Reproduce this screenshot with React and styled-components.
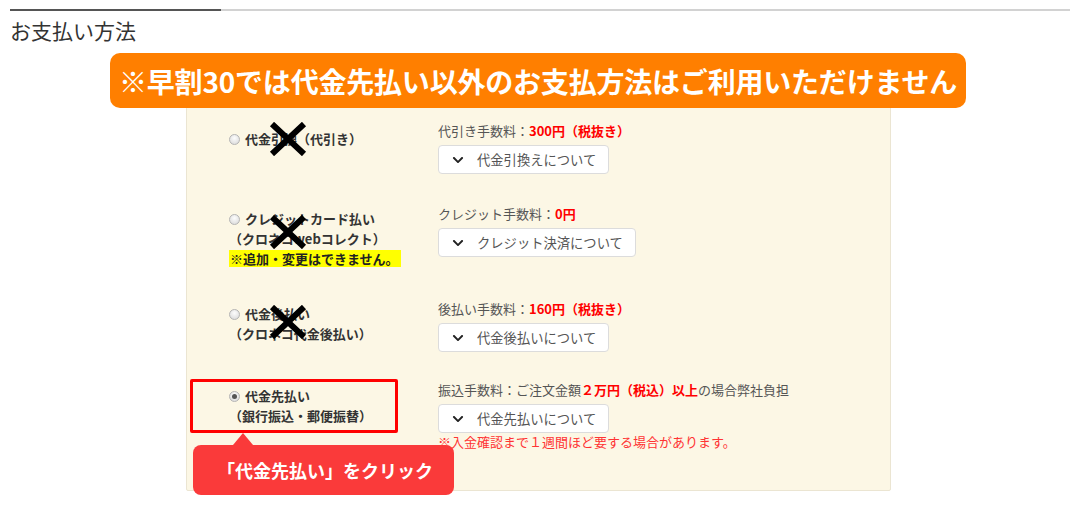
import styled, { createGlobalStyle } from "styled-components";
import { FaChevronDown } from "react-icons/fa";

const GlobalStyle = createGlobalStyle`
  body {
    margin: 0;
    background: #fff;
    font-family: "Noto Sans CJK JP", "Noto Sans", sans-serif;
    color: #333;
  }
`;

const Page = styled.div`
  position: relative;
  width: 1080px;
  height: 509px;
  padding: 9px 10px 0;
  box-sizing: border-box;
  overflow: hidden;
`;

const TabBar = styled.div`
  display: flex;
  height: 2px;
`;

const TabActive = styled.div`
  width: 211px;
  background: #555;
`;

const TabRest = styled.div`
  flex: 1;
  height: 2px;
  background: #d2d2d2;
`;

const Title = styled.h2`
  margin: 7px 0 0;
  font-size: 21px;
  font-weight: normal;
  line-height: 24px;
  color: #333;
`;

const Panel = styled.div`
  margin: 13px 0 0 176px;
  width: 705px;
  box-sizing: border-box;
  background: #fcf7e5;
  border: 1px solid #ebe5d2;
  border-radius: 2px;
  padding: 66px 0 8px;
`;

const Row = styled.div`
  display: grid;
  grid-template-columns: 251px 1fr;
  align-items: start;
  padding-bottom: ${(p) => p.$gap ?? 31}px;
`;

const Choice = styled.div`
  position: relative;
  padding: ${(p) => p.$pad ?? 4}px 0 0 42px;
  font-size: 13px;
  font-weight: bold;
  line-height: 20px;
  color: #333;
`;

const SelectedChoice = styled(Choice)`
  justify-self: start;
  width: 208px;
  box-sizing: border-box;
  margin: -2px 0 0 3px;
  padding: 4px 0 4px 36px;
  border: 3px solid #f00;
  border-radius: 2px;
`;

const Radio = styled.span`
  display: inline-block;
  width: 11px;
  height: 11px;
  margin-right: 5px;
  vertical-align: -1px;
  border-radius: 50%;
  box-sizing: border-box;
  border: 1px solid #b4b4b4;
  background: radial-gradient(circle at 50% 35%, #fdfdfd, #d6d6d6);
  position: relative;

  &::after {
    content: "";
    display: ${(p) => (p.$checked ? "block" : "none")};
    position: absolute;
    left: 2px;
    top: 2px;
    width: 5px;
    height: 5px;
    border-radius: 50%;
    background: #555;
  }
`;

const Notice = styled.span`
  display: inline-block;
  background: #ffff00;
  color: #222;
  padding: 0 2px 0 1px;
  line-height: 17px;
  margin-top: 1px;
`;

const Cross = styled.svg`
  position: absolute;
  left: 82px;
  top: ${(p) => p.$top}px;
  width: 38px;
  height: 34px;
`;

const Detail = styled.div`
  font-size: 13px;
  line-height: 18px;
  color: #555;
`;

const Red = styled.span`
  color: #f00;
  font-weight: bold;
`;

const InfoButton = styled.div`
  display: inline-flex;
  align-items: center;
  gap: 13px;
  height: 29px;
  margin-top: 5px;
  padding: 0 12px 0 13px;
  box-sizing: border-box;
  background: #fff;
  border: 1px solid #dcdcdc;
  border-radius: 4px;
  font-size: 13.3px;
  color: #555;

  svg {
    color: #222;
  }
`;

const Caution = styled.div`
  color: #f33;
  font-size: 13px;
  line-height: 18px;
`;

const Banner = styled.div`
  position: absolute;
  left: 110px;
  top: 53px;
  width: 856px;
  height: 55px;
  display: flex;
  align-items: center;
  justify-content: center;
  background: #ff7f00;
  border-radius: 10px;
  color: #fff;
  font-size: 28px;
  font-weight: bold;
  letter-spacing: -0.2px;
`;

const Tip = styled.div`
  position: absolute;
  left: 0;
  top: calc(100% + 15px);
  width: 261px;
  height: 50px;
  display: flex;
  align-items: center;
  padding-left: 24px;
  box-sizing: border-box;
  background: #fa3a3a;
  border-radius: 8px;
  color: #fff;
  font-size: 18px;
  font-weight: bold;

  &::before {
    content: "";
    position: absolute;
    left: 40px;
    top: -12px;
    border-left: 10px solid transparent;
    border-right: 10px solid transparent;
    border-bottom: 12px solid #fa3a3a;
  }
`;

const XMark = ({ top }) => (
  <Cross $top={top} viewBox="0 0 38 34">
    <path d="M3 2 L35 32 M35 2 L3 32" stroke="#000" strokeWidth="6" />
  </Cross>
);

const Info = ({ children }) => (
  <InfoButton>
    <FaChevronDown size={12} />
    {children}
  </InfoButton>
);

export default function App() {
  return (
    <Page>
      <GlobalStyle />
      <TabBar>
        <TabActive />
        <TabRest />
      </TabBar>
      <Title>お支払い方法</Title>

      <Panel>
        <Row>
          <Choice $pad={7}>
            <Radio />代金引換（代引き）
            <XMark top={0} />
          </Choice>
          <div>
            <Detail>
              代引き手数料：<Red>300円（税抜き）</Red>
            </Detail>
            <Info>代金引換えについて</Info>
          </div>
        </Row>

        <Row>
          <Choice>
            <Radio />クレジットカード払い
            <br />（クロネコwebコレクト）
            <br />
            <Notice>※追加・変更はできません。</Notice>
            <XMark top={10} />
          </Choice>
          <div>
            <Detail>
              クレジット手数料：<Red>0円</Red>
            </Detail>
            <Info>クレジット決済について</Info>
          </div>
        </Row>

        <Row $gap={29}>
          <Choice>
            <Radio />代金後払い
            <br />（クロネコ代金後払い）
            <XMark top={5} />
          </Choice>
          <div>
            <Detail>
              後払い手数料：<Red>160円（税抜き）</Red>
            </Detail>
            <Info>代金後払いについて</Info>
          </div>
        </Row>

        <Row>
          <SelectedChoice>
            <Radio $checked />代金先払い
            <br />（銀行振込・郵便振替）
            <Tip>「代金先払い」をクリック</Tip>
          </SelectedChoice>
          <div>
            <Detail>
              振込手数料：ご注文金額<Red>２万円（税込）以上</Red>の場合弊社負担
            </Detail>
            <Info>代金先払いについて</Info>
            <Caution>※入金確認まで１週間ほど要する場合があります。</Caution>
          </div>
        </Row>
      </Panel>

      <Banner>※早割30では代金先払い以外のお支払方法はご利用いただけません</Banner>
    </Page>
  );
}
